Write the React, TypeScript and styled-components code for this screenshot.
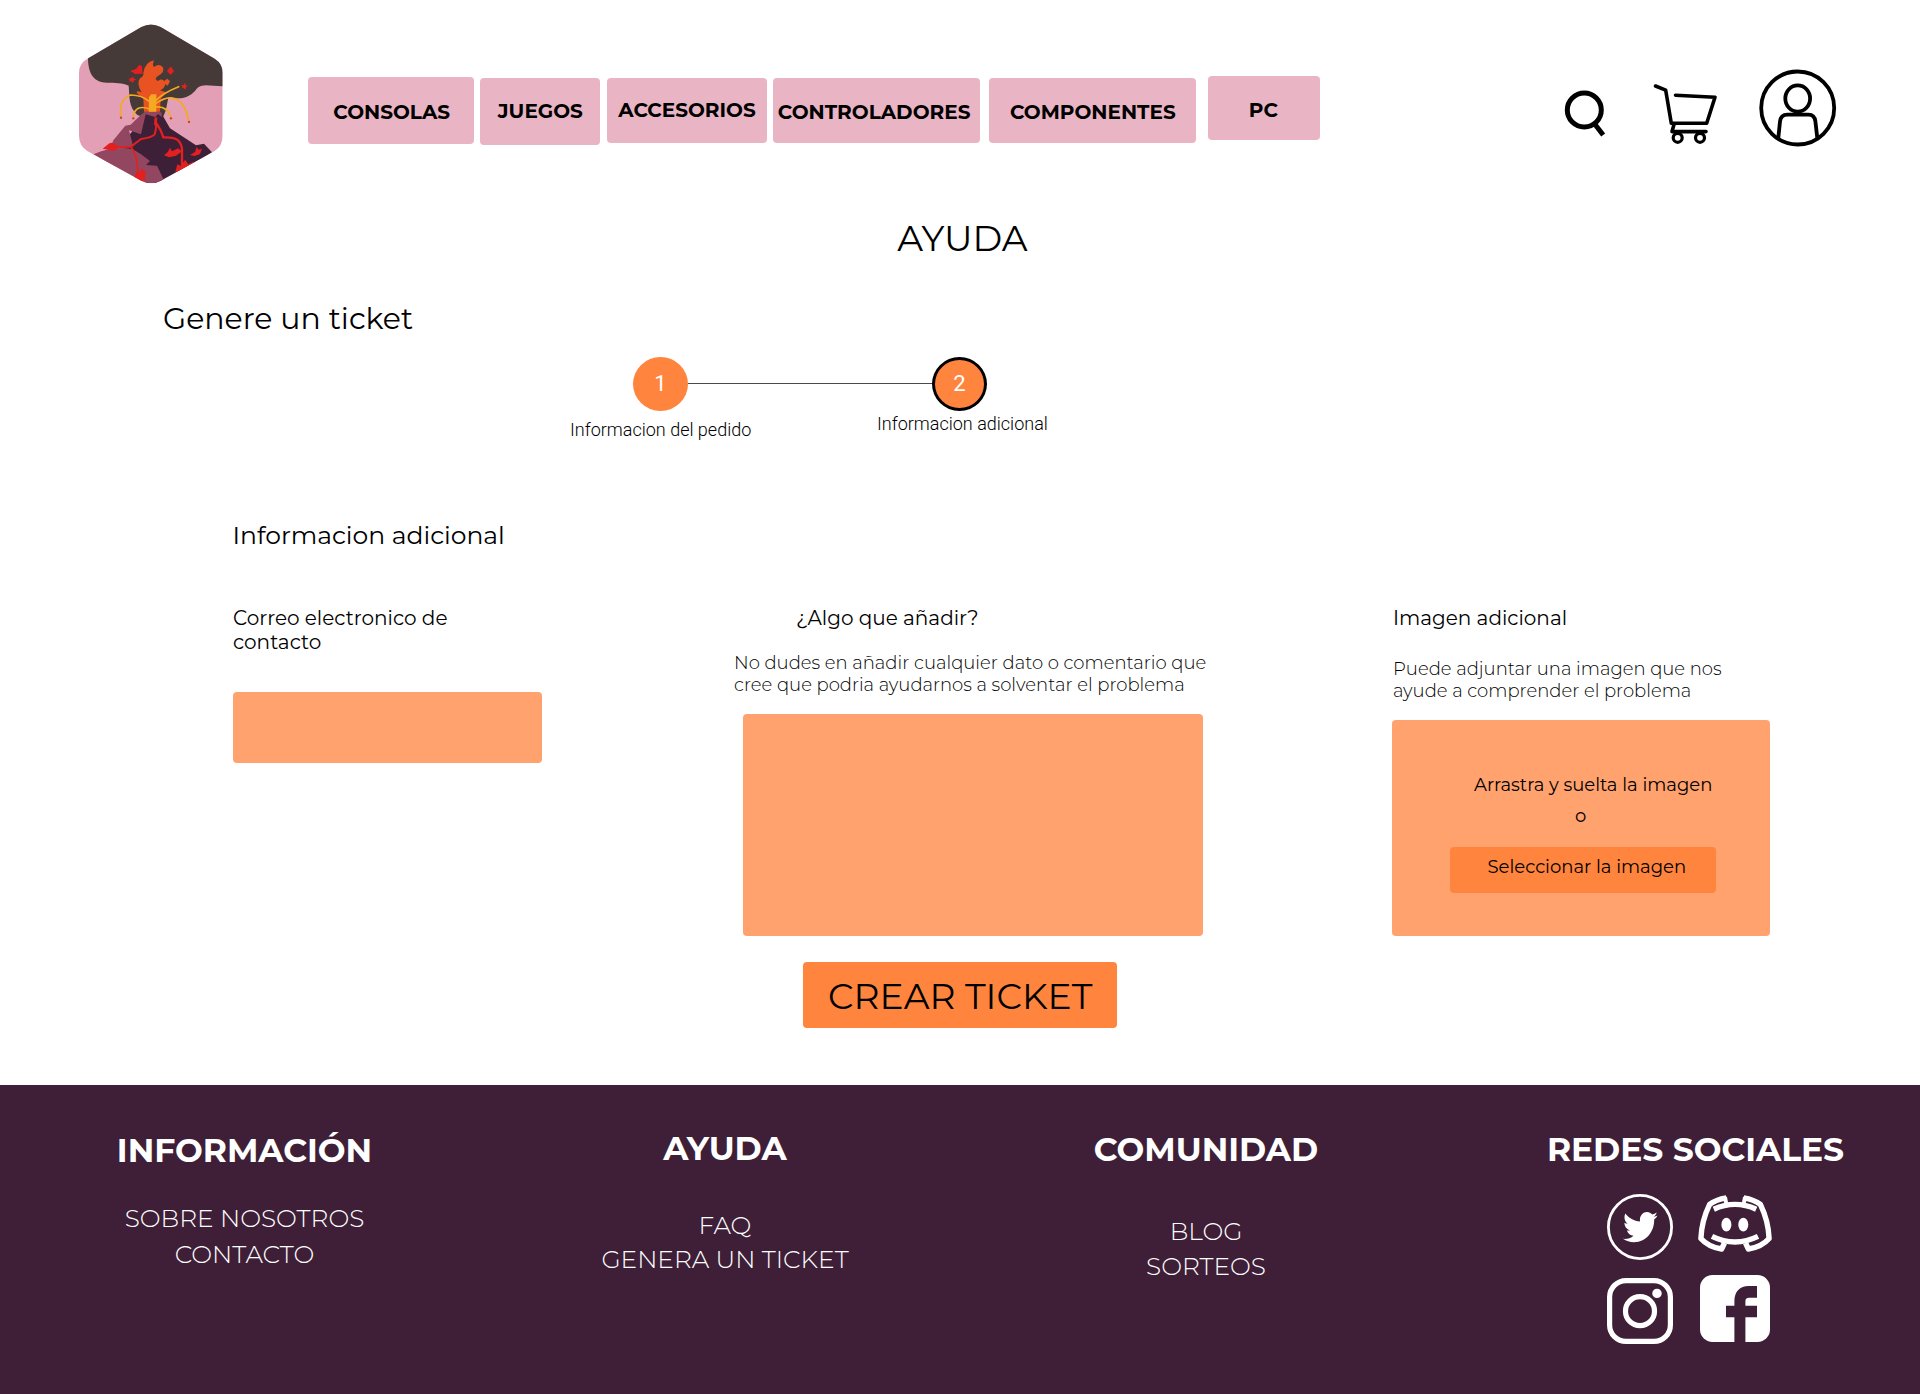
import React from "react";
import styled, { createGlobalStyle } from "styled-components";
import { FaTwitter } from "react-icons/fa";

const colors = {
  pink: "#e9b4c4",
  orange: "#ff843e",
  orangeSoft: "#ffa26e",
  plum: "#3e1f37",
};

const GlobalStyle = createGlobalStyle`
  *, *::before, *::after { box-sizing: border-box; }
  body {
    margin: 0;
    background: #fff;
    color: #000;
    font-family: Montserrat, Inter, "Liberation Sans", sans-serif;
  }
  h1, h2, h3, p, ul { margin: 0; padding: 0; font-weight: inherit; }
  a { color: inherit; text-decoration: none; }
  button { border: 0; font: inherit; color: inherit; text-align: left; }
  svg { display: block; flex: none; }
`;

/* Header */

const Header = styled.header`
  display: flex;
  align-items: flex-start;
  height: 200px;
  padding-left: 79px;
`;

const LogoLink = styled.a`
  margin-top: 24px;
`;

const Nav = styled.nav`
  display: flex;
  align-items: flex-start;
  margin-left: 85px;
`;

const NavTile = styled.a<{ $w: number; $h: number; $top: number; $gap: number; $pad: string }>`
  width: ${(p) => p.$w}px;
  height: ${(p) => p.$h}px;
  margin: ${(p) => p.$top}px 0 0 ${(p) => p.$gap}px;
  padding: ${(p) => p.$pad};
  border-radius: 4px;
  background: ${colors.pink};
  font-size: 20px;
  font-weight: 700;
  line-height: 24px;
  white-space: nowrap;
`;

const Actions = styled.div`
  display: flex;
  align-items: flex-start;
  margin-left: 240px;
  padding-top: 67px;
`;

const SearchSlot = styled.a`
  margin: 19px 40px 0 0;
`;
const CartSlot = styled.a`
  margin: 13px 37px 0 0;
`;

/* Main */

const Title = styled.h1`
  margin-top: 16px;
  padding-left: 5px;
  text-align: center;
  font-size: 36px;
  line-height: 44px;
`;

const Subtitle = styled.h2`
  margin-top: 40px;
  padding-left: 163px;
  font-size: 30px;
  line-height: 37px;
`;

const Stepper = styled.div`
  margin-top: 20px;
  font-family: Roboto, "Liberation Sans", sans-serif;
  font-weight: 300;
`;

const StepTrack = styled.div`
  display: flex;
  align-items: center;
  padding-left: 633px;
`;

const StepDot = styled.span<{ $current?: boolean }>`
  display: flex;
  align-items: center;
  justify-content: center;
  width: 55px;
  height: 54px;
  padding-bottom: 1px;
  border: ${(p) => (p.$current ? "3px solid #000" : "0")};
  border-radius: 50%;
  background: ${colors.orange};
  color: #fff;
  font-size: 22px;
  font-weight: 400;
  line-height: 26px;
`;

const StepLine = styled.span`
  width: 244px;
  height: 1px;
  margin-bottom: 1px;
  background: #4a4a4a;
`;

const StepLabels = styled.div`
  display: grid;
  grid-template-columns: 307px auto;
  align-items: start;
  height: 30px;
  padding-left: 570px;
`;

const StepLabel = styled.span<{ $drop: number }>`
  padding-top: ${(p) => p.$drop}px;
  font-size: 18px;
  line-height: 22px;
  white-space: nowrap;
`;

const SectionTitle = styled.h3`
  margin-top: 79px;
  padding-left: 232.5px;
  font-size: 25px;
  line-height: 30px;
`;

const Form = styled.form`
  display: flex;
  flex-direction: column;
  align-items: center;
`;

const Columns = styled.div`
  display: flex;
  align-items: flex-start;
  width: 100%;
  margin-top: 56px;
  padding-left: 233px;
`;

const Column = styled.div<{ $w: number; $gap?: number }>`
  width: ${(p) => p.$w}px;
  margin-left: ${(p) => p.$gap ?? 0}px;
`;

const Label = styled.p<{ $inset?: number }>`
  padding-left: ${(p) => p.$inset ?? 0}px;
  font-size: 20px;
  line-height: 24px;
`;

const Hint = styled.p<{ $top: number }>`
  margin: ${(p) => p.$top}px 0 18px;
  padding-left: 1px;
  font-size: 18px;
  font-weight: 300;
  line-height: 22px;
  white-space: nowrap;
`;

const EmailField = styled.div`
  height: 71px;
  margin-top: 38px;
  border-radius: 4px;
  background: ${colors.orangeSoft};
`;

const CommentField = styled.div`
  width: 460px;
  height: 222px;
  margin-left: 10px;
  border-radius: 4px;
  background: ${colors.orangeSoft};
`;

const DropZone = styled.div`
  height: 216px;
  padding-top: 54px;
  border-radius: 4px;
  background: ${colors.orangeSoft};
  font-size: 18px;
  line-height: 22px;
`;

const DropText = styled.p`
  padding-left: 82px;
`;

const DropOr = styled.p`
  margin-top: 9px;
  padding-left: 183px;
`;

const PickButton = styled.button`
  display: flex;
  align-items: flex-start;
  width: 266px;
  height: 46px;
  margin: 20px 0 0 58px;
  padding: 9px 0 0 37.5px;
  border-radius: 4px;
  background: ${colors.orange};
`;

const SubmitButton = styled.button`
  display: flex;
  align-items: flex-start;
  width: 314px;
  height: 66px;
  margin-top: 26px;
  padding: 12px 0 0 25px;
  border-radius: 4px;
  background: ${colors.orange};
  font-size: 36px;
  line-height: 44px;
  white-space: nowrap;
`;

/* Footer */

const Footer = styled.footer`
  display: grid;
  grid-template-columns: 489px 472px 490px 469px;
  align-items: start;
  height: 309px;
  margin-top: 57px;
  background: ${colors.plum};
  color: #fff;
  text-align: center;
  white-space: nowrap;
`;

const FooterColumn = styled.section<{ $top: number; $shift?: number }>`
  padding: ${(p) => p.$top}px 0 0 ${(p) => p.$shift ?? 0}px;
`;

const FooterHeading = styled.h3`
  font-size: 32.9px;
  font-weight: 700;
  line-height: 40px;
`;

const FooterLinks = styled.ul<{ $gap: number; $line: number }>`
  margin-top: ${(p) => p.$gap}px;
  list-style: none;
  font-size: 24.8px;
  font-weight: 300;
  line-height: ${(p) => p.$line}px;
`;

const SocialGrid = styled.div`
  display: grid;
  grid-template-columns: 66px 74px;
  gap: 15px 25px;
  margin: 25px 0 0 136px;
`;

const SocialLink = styled.a<{ $x?: number; $y?: number }>`
  padding: ${(p) => p.$y ?? 0}px 0 0 ${(p) => p.$x ?? 0}px;
`;

/* Drawings */

const Logo = () => (
  <svg width="144" height="160" viewBox="57 43 432 480">
    <defs>
      <clipPath id="hexagon">
        <path d="M244 52Q273 37 302 52L464 147Q488 162 488 190V378Q488 408 464 424L302 513Q273 529 244 513L82 424Q57 408 57 378V190Q57 162 82 147Z" />
      </clipPath>
    </defs>
    <g clipPath="url(#hexagon)">
      <path fill="#e29fb6" d="M50 40H495V530H50Z" />
      <path fill="#463a38" d="M84 40V150C86 198 105 217 140 219C165 221 188 218 206 228C209 262 205 290 232 316L250 322L310 320C320 302 320 282 326 262C365 272 393 262 410 237C426 220 450 229 489 230V40Z" />
      <path fill="#3d1f37" d="M252 307L302 307L330 356L408 407L432 402L456 428L300 530L200 470L190 400L243 330Z" />
      <path fill="#93465f" d="M240 318L254 306H286L304 308L306 322L294 313L286 322L257 314L243 374L207 362L217 400L215 412L150 418L160 392L196 348L212 345Z" />
      <path fill="#93465f" d="M100 434Q160 408 217 418Q244 432 270 454L258 466L291 468L312 512L270 540Z" />
      <g fill="none" stroke="#e3201f" strokeLinecap="round" strokeLinejoin="round">
        <path strokeWidth="6" d="M287 330Q291 350 284 374Q276 383 243 388L213 411L155 412" />
        <path strokeWidth="7" d="M290 342Q304 362 310 383Q345 382 354 392Q368 404 366 430V465" />
        <path strokeWidth="5" d="M215 414Q230 440 231 462L235 490" />
      </g>
      <g fill="#e3201f">
        <path d="M284 322L292 324L290 350L282 345Z" />
        <path d="M128 417L146 402Q157 396 166 404L180 414L160 423Z" />
        <path d="M222 504L230 484L240 488L244 477L257 485L255 512L238 517Z" />
        <path d="M312 437L324 426L330 414L336 425L354 416L366 425L348 438L328 443Z" />
        <path d="M346 486L352 464L362 468L376 450L384 464L400 456L410 460L370 487Z" />
        <path d="M390 436L405 427L410 412L416 420L426 417L420 433L404 439Z" />
        <path d="M211 184L228 178L238 165L246 170L248 192L226 193Z" />
        <path d="M205 207L213 206L220 201L222 207L229 209L221 213L220 220L213 215L206 216L210 211Z" />
        <path d="M321 185L328 174L334 172L342 185L332 196Z" />
        <path d="M363 226L371 226L375 219L377 227L383 229L378 233L377 240L370 234L364 237L368 231Z" />
      </g>
      <g fill="#e95322">
        <path d="M252 306L250 268L230 250L232 244L245 248Q228 222 240 206Q252 200 250 190Q254 158 282 152Q276 166 282 172Q296 160 308 172Q318 186 290 202Q283 210 294 214Q308 204 315 218Q318 236 300 242L318 248L302 268L300 306Z" />
        <path d="M313 213L322 207L330 215L323 228L314 222Z" />
      </g>
      <path fill="#f4a922" d="M267 262L274 254H289V306H266Z" />
      <g fill="none" stroke="#f4a922" strokeWidth="5" strokeLinecap="round">
        <path d="M269 276Q246 256 212 256Q178 266 182 320" />
        <path d="M269 298Q226 282 219 322" />
        <path d="M286 274Q308 250 356 231" />
        <path d="M286 282Q330 250 360 276Q380 298 385 332" />
        <path d="M286 292Q322 288 332 322" />
      </g>
      <g fill="#cf3c3c">
        <circle cx="183" cy="324" r="3.5" />
        <circle cx="220" cy="326" r="3.5" />
        <circle cx="333" cy="326" r="3.5" />
        <circle cx="387" cy="337" r="3.5" />
      </g>
    </g>
  </svg>
);

const SearchIcon = () => (
  <svg width="50" height="55" viewBox="0 0 50 55" fill="none" stroke="#000">
    <circle cx="24.3" cy="24" r="17" strokeWidth="5" />
    <path d="M34.3 37.5L43.2 49" strokeWidth="5" />
  </svg>
);

const CartIcon = () => (
  <svg width="70" height="70" viewBox="0 0 70 70" fill="none" stroke="#000" strokeWidth="3.6" strokeLinecap="round" strokeLinejoin="round">
    <path d="M5.5 6L15.7 10.2L21.3 43.3H56.7L65 17.2L25.5 15.2" />
    <path d="M24 44.5L22 51.6H56" />
    <circle cx="27.7" cy="57.8" r="4.5" strokeWidth="3.2" />
    <circle cx="50" cy="57.8" r="4.5" strokeWidth="3.2" />
  </svg>
);

const UserIcon = () => (
  <svg width="82" height="82" viewBox="0 0 82 82" fill="none" stroke="#000" strokeWidth="3.8">
    <circle cx="40.7" cy="41" r="36.5" />
    <ellipse cx="40.7" cy="31.5" rx="12.4" ry="13.1" />
    <path d="M21.3 71L23 54.5Q23.7 47.6 30.5 47.6H51.5Q57.6 47.6 58.4 54.5L60.3 71" />
  </svg>
);

const TwitterBadge = () => (
  <svg width="66" height="66" viewBox="0 0 66 66" color="#fff">
    <circle cx="33" cy="33" r="31.6" fill="none" stroke="#fff" strokeWidth="2.8" />
    <g transform="translate(16 14.5) scale(0.347 0.373)">
      <FaTwitter size={100} />
    </g>
  </svg>
);

const DiscordLogo = () => (
  <svg width="74" height="57" viewBox="0 0 74 57" fill="none" stroke="#fff" strokeWidth="5.4" strokeLinejoin="round">
    <path d="M28.3 2.8Q18 4.4 11.6 9.4Q3.6 26 2.9 43.4Q10 51.6 23.6 54L26.5 48" />
    <path d="M45.7 2.8Q56 4.4 62.4 9.4Q70.4 26 71.1 43.4Q64 51.6 50.4 54L47.5 48" />
    <path d="M27 2L28.4 9.5M47 2L45.6 9.5" strokeWidth="4" />
    <path d="M15.8 14.2Q37 4.6 58.2 14.2" />
    <path d="M14 41.4Q37 52.6 60 41.4" />
    <ellipse cx="28.4" cy="29.7" rx="5" ry="6.9" fill="#fff" stroke="none" />
    <ellipse cx="45.3" cy="29.7" rx="5" ry="6.9" fill="#fff" stroke="none" />
  </svg>
);

const InstagramLogo = () => (
  <svg width="66" height="66" viewBox="0 0 66 66" fill="none" stroke="#fff" strokeWidth="5.2">
    <rect x="2.6" y="2.6" width="60.8" height="60.8" rx="16.5" />
    <circle cx="33" cy="33.2" r="14.5" />
    <circle cx="50" cy="15.4" r="4.7" fill="#fff" stroke="none" />
  </svg>
);

const FacebookLogo = () => (
  <svg width="70" height="67" viewBox="0 0 70 67">
    <rect width="70" height="67" rx="12.5" fill="#fff" />
    <path fill={colors.plum} d="M34.4 67V42.3H26V30.7H34.4V26C34.4 16.5 40 11 48.5 11H57V22.8H49C46.4 22.8 45.4 24 45.4 26.4V30.7H57V42.3H45.4V67Z" />
  </svg>
);

const navItems = [
  { text: "CONSOLAS", w: 166, h: 67, top: 77, gap: 0, pad: "23px 0 0 25.3px" },
  { text: "JUEGOS", w: 120, h: 67, top: 78, gap: 6, pad: "21px 0 0 17.8px" },
  { text: "ACCESORIOS", w: 160, h: 65, top: 78, gap: 7, pad: "20px 0 0 11.3px" },
  { text: "CONTROLADORES", w: 207, h: 65, top: 78, gap: 6, pad: "22px 0 0 4.8px" },
  { text: "COMPONENTES", w: 207, h: 65, top: 78, gap: 9, pad: "22px 0 0 21px" },
  { text: "PC", w: 112, h: 64, top: 76, gap: 12, pad: "22px 0 0 40.8px" },
];

const footerColumns = [
  { title: "INFORMACIÓN", top: 45, gap: 31, line: 35.5, links: ["SOBRE NOSOTROS", "CONTACTO"] },
  { title: "AYUDA", top: 43, gap: 40, line: 34, links: ["FAQ", "GENERA UN TICKET"] },
  { title: "COMUNIDAD", top: 44, gap: 45, line: 35, links: ["BLOG", "SORTEOS"] },
];

export default function App() {
  return (
    <>
      <GlobalStyle />
      <Header>
        <LogoLink href="#"><Logo /></LogoLink>
        <Nav>
          {navItems.map((n) => (
            <NavTile key={n.text} href="#" $w={n.w} $h={n.h} $top={n.top} $gap={n.gap} $pad={n.pad}>
              {n.text}
            </NavTile>
          ))}
        </Nav>
        <Actions>
          <SearchSlot href="#"><SearchIcon /></SearchSlot>
          <CartSlot href="#"><CartIcon /></CartSlot>
          <a href="#"><UserIcon /></a>
        </Actions>
      </Header>

      <main>
        <Title>AYUDA</Title>
        <Subtitle>Genere un ticket</Subtitle>
        <Stepper>
          <StepTrack>
            <StepDot>1</StepDot>
            <StepLine />
            <StepDot $current>2</StepDot>
          </StepTrack>
          <StepLabels>
            <StepLabel $drop={8}>Informacion del pedido</StepLabel>
            <StepLabel $drop={2}>Informacion adicional</StepLabel>
          </StepLabels>
        </Stepper>

        <SectionTitle>Informacion adicional</SectionTitle>
        <Form>
          <Columns>
            <Column $w={309}>
              <Label>Correo electronico de<br />contacto</Label>
              <EmailField />
            </Column>
            <Column $w={475} $gap={191}>
              <Label $inset={63}>¿Algo que añadir?</Label>
              <Hint $top={22}>
                No dudes en añadir cualquier dato o comentario que<br />
                cree que podria ayudarnos a solventar el problema
              </Hint>
              <CommentField />
            </Column>
            <Column $w={378} $gap={184}>
              <Label $inset={1}>Imagen adicional</Label>
              <Hint $top={28}>
                Puede adjuntar una imagen que nos<br />
                ayude a comprender el problema
              </Hint>
              <DropZone>
                <DropText>Arrastra y suelta la imagen</DropText>
                <DropOr>o</DropOr>
                <PickButton type="button">Seleccionar la imagen</PickButton>
              </DropZone>
            </Column>
          </Columns>
          <SubmitButton type="button">CREAR TICKET</SubmitButton>
        </Form>
      </main>

      <Footer>
        {footerColumns.map((c) => (
          <FooterColumn key={c.title} $top={c.top}>
            <FooterHeading>{c.title}</FooterHeading>
            <FooterLinks $gap={c.gap} $line={c.line}>
              {c.links.map((text) => (
                <li key={text}>{text}</li>
              ))}
            </FooterLinks>
          </FooterColumn>
        ))}
        <FooterColumn $top={44} $shift={20}>
          <FooterHeading>REDES SOCIALES</FooterHeading>
          <SocialGrid>
            <SocialLink href="#"><TwitterBadge /></SocialLink>
            <SocialLink href="#" $y={1}><DiscordLogo /></SocialLink>
            <SocialLink href="#" $y={3}><InstagramLogo /></SocialLink>
            <SocialLink href="#" $x={2}><FacebookLogo /></SocialLink>
          </SocialGrid>
        </FooterColumn>
      </Footer>
    </>
  );
}
